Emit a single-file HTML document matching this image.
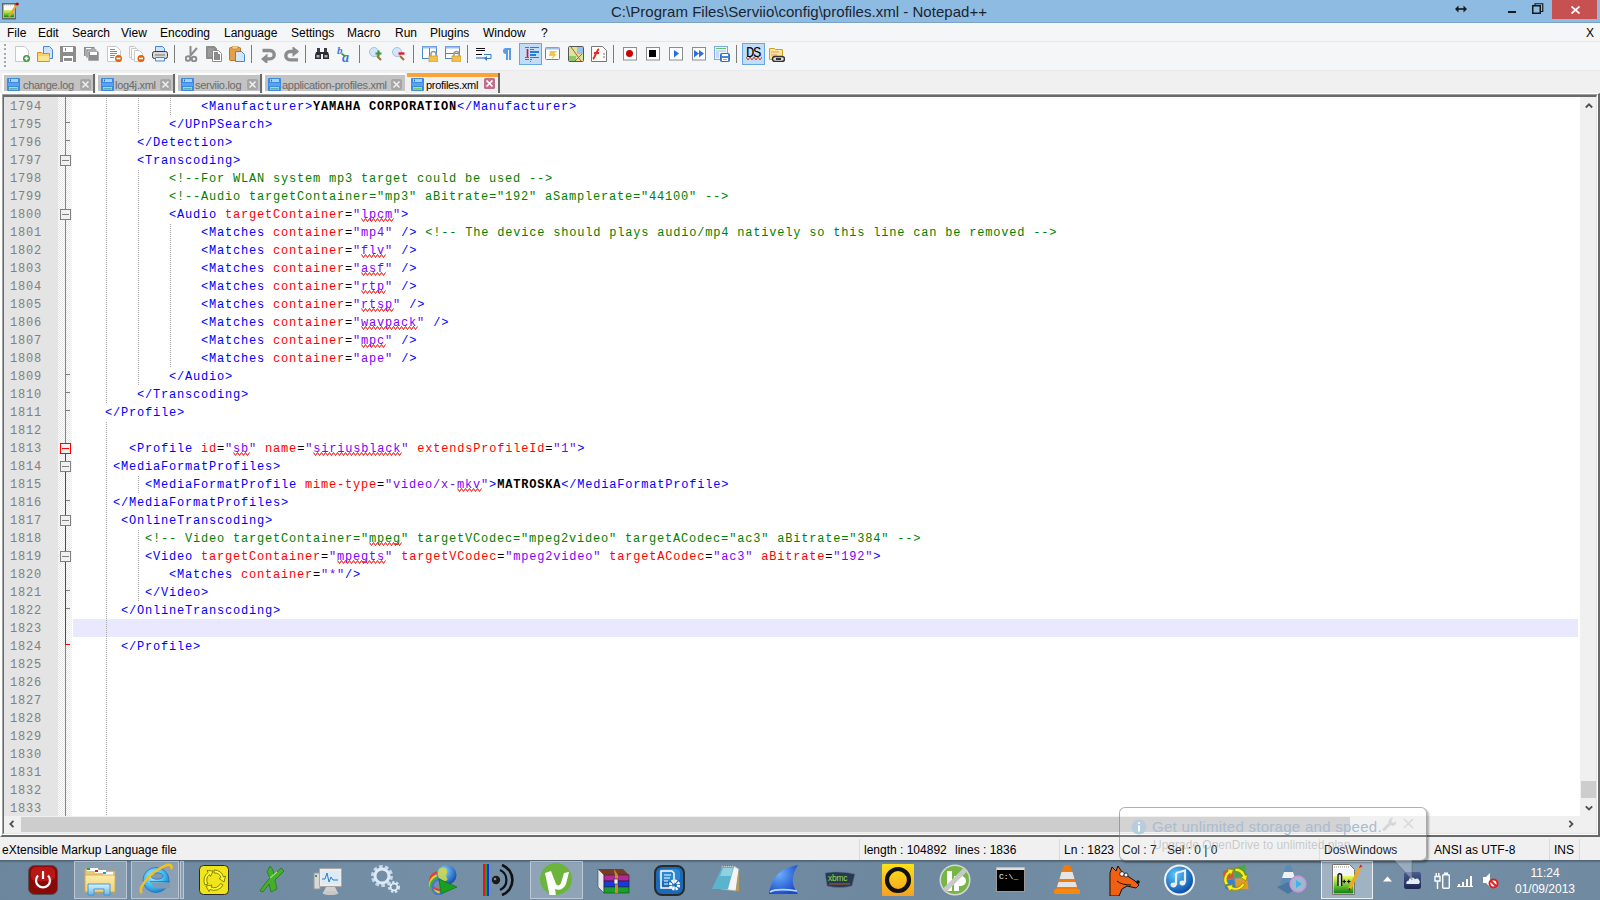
<!DOCTYPE html><html><head><meta charset="utf-8"><style>
*{margin:0;padding:0;box-sizing:border-box}
html,body{width:1600px;height:900px;overflow:hidden;background:#f0f0f0;font-family:"Liberation Sans",sans-serif;}
.abs{position:absolute}
#title{left:0;top:0;width:1600px;height:23px;background:#8dbbe1;border-bottom:1px solid #7aa3c6}
#title .tt{position:absolute;left:611px;top:3px;font-size:15px;color:#1b2430;white-space:nowrap;letter-spacing:0.03px}
#menu{left:0;top:23px;width:1600px;height:19px;background:#f5f6f7;border-bottom:1px solid #e4e6e8}
#menu span{position:absolute;top:3px;font-size:12px;color:#000;white-space:nowrap}
#tool{left:0;top:42px;width:1600px;height:29px;background:#f5f6f7;border-bottom:1px solid #e8e9ea}
#tabs{left:0;top:71px;width:1600px;height:24px;background:#f0f0f0}
.tabt{font-size:11px;letter-spacing:-0.3px;white-space:nowrap;line-height:14px}
.tab{position:absolute;top:4px;height:19px;background:#c3c3c3;border-top:1px solid #fdfdfd;border-left:1px solid #fdfdfd}
.tab .tx{position:absolute;top:3px;font-size:10.6px;color:#6d6d6d;white-space:nowrap;letter-spacing:-0.2px}
.tab .cl{position:absolute;top:3px;width:11px;height:11px;background:#9b9b9b;border-radius:2px}
.tabsep{position:absolute;top:4px;width:2px;height:20px;background:#6a6a6a}
#edo{left:0;top:93px;width:1600px;height:744px;border-top:1px solid #fff;border-left:2px solid #fff;border-right:2px solid #696969;border-bottom:2px solid #696969}
#ed{left:2px;top:94px;width:1596px;height:741px;border-top:1px solid #a0a0a0;border-left:1px solid #a0a0a0;border-right:1px solid #ffffff;border-bottom:1px solid #ffffff}
#edin{position:absolute;left:0;top:0;right:0;bottom:0;border-top:2px solid #696969;border-left:1px solid #696969;border-right:1px solid #e3e3e3;border-bottom:1px solid #e3e3e3;background:#fff;overflow:hidden}
#lnm{left:4px;top:97px;width:54px;height:719px;background:#e4e4e4}
#fold{left:58px;top:97px;width:14px;height:719px;background-color:#fff;background-image:repeating-conic-gradient(#e8e8e8 0 25%,#ffffff 0 50%);background-size:2px 2px}
.ln{position:absolute;left:10px;width:40px;height:18px;font-family:"Liberation Mono",monospace;font-size:12px;letter-spacing:0.8px;margin-top:1px;line-height:18px;color:#808080;white-space:pre}
.cl2{position:absolute;left:73px;height:18px;font-family:"Liberation Mono",monospace;font-size:12px;letter-spacing:0.8px;margin-top:1px;line-height:18px;white-space:pre;color:#000}
.cl2 i{font-style:normal}
.t{color:#0000ff}.a{color:#ff0000}.v{color:#8000ff}.c{color:#008000}.d{color:#000;font-weight:bold}.k{color:#000}
.cl2 u{text-decoration:underline wavy #ff0000;text-decoration-thickness:1px;text-underline-offset:2px;text-decoration-skip-ink:none}
.g{position:absolute;width:1px;background:repeating-linear-gradient(to bottom,#a8a8a8 0 1px,transparent 1px 2px)}
#curl{left:73px;top:619px;width:1505px;height:18px;background:#e8e8ff}
#vsb{left:1580px;top:97px;width:16px;height:736px;background:#f0f0f0}
#hsb{left:4px;top:816px;width:1592px;height:17px;background:#f0f0f0}
#status{left:0;top:837px;width:1600px;height:23px;background:#f0f0f0}
#status span{position:absolute;top:6px;font-size:12px;color:#000;white-space:nowrap}
.ssep{position:absolute;top:2px;width:1px;height:21px;background:#dadada}
#task{left:0;top:860px;width:1600px;height:40px;background:#6f8ea9}
</style></head><body><div id="title" class="abs"><span class="tt">C:\Program Files\Serviio\config\profiles.xml - Notepad++</span></div><svg class="abs" style="left:2px;top:2px" width="18" height="18" viewBox="0 0 18 18"><defs><linearGradient id="ap" x1="0" y1="0" x2="0" y2="1"><stop offset="0" stop-color="#e8f070"/><stop offset="0.5" stop-color="#7ad03a"/><stop offset="1" stop-color="#0a7a10"/></linearGradient></defs><rect x="0.75" y="1.75" width="12.5" height="15" fill="#fff" stroke="#666" stroke-width="1.5"/><path d="M2 3h10" stroke="#aaa" stroke-dasharray="1 1"/><rect x="2" y="8" width="10" height="7.5" fill="url(#ap)"/><path d="M7 14.5l7-11" stroke="#f2a818" stroke-width="2.2"/><circle cx="15.3" cy="2" r="1.5" fill="#b00"/></svg><svg class="abs" style="left:1455px;top:5px" width="12" height="8" viewBox="0 0 12 8"><path d="M1 4h10" stroke="#1a1a1a" stroke-width="1.6"/><path d="M0 4l3.5-3.5v7zM12 4L8.5 0.5v7z" fill="#1a1a1a"/></svg><div class="abs" style="left:1508px;top:11px;width:8px;height:2px;background:#1a1a1a"></div><svg class="abs" style="left:1532px;top:3px" width="12" height="12" viewBox="0 0 12 12"><rect x="0.75" y="2.75" width="7.5" height="7.5" fill="none" stroke="#1a1a1a" stroke-width="1.5"/><path d="M3 2.5V0.75h7.75V8.5H9" fill="none" stroke="#1a1a1a" stroke-width="1.2"/></svg><div class="abs" style="left:1552px;top:0;width:45px;height:19px;background:#c75050"></div><svg class="abs" style="left:1571px;top:6px" width="9" height="8" viewBox="0 0 9 8"><path d="M0.5 0.5l8 7M8.5 0.5l-8 7" stroke="#fff" stroke-width="1.7"/></svg>
<div id="menu" class="abs"><span style="left:7px">File</span><span style="left:38px">Edit</span><span style="left:72px">Search</span><span style="left:121px">View</span><span style="left:160px">Encoding</span><span style="left:224px">Language</span><span style="left:291px">Settings</span><span style="left:347px">Macro</span><span style="left:395px">Run</span><span style="left:430px">Plugins</span><span style="left:483px">Window</span><span style="left:541px">?</span><span style="left:1586px">X</span></div>
<div id="tool" class="abs"></div><div class="abs" style="left:4px;top:44px;width:2px;height:26px;background:repeating-linear-gradient(to bottom,#a8a8a8 0 2px,transparent 2px 4.25px)"></div><svg class="abs" style="left:15px;top:46px" width="16" height="16" viewBox="0 0 16 16"><path d="M0.5 0.5h9l4 4v11h-13z" fill="#fff" stroke="#c8c8c8"/><circle cx="11.5" cy="12.5" r="3.5" fill="#3a9a3a"/><path d="M9.5 12.5h4M11.5 10.5v4" stroke="#fff" stroke-width="1.6"/></svg><svg class="abs" style="left:37px;top:46px" width="16" height="16" viewBox="0 0 16 16"><path d="M6.5 0.5h6l3 3v9h-9z" fill="#cfe3fb" stroke="#4a86d8"/><path d="M0.5 6.5h4l1 1h7v8h-12z" fill="#f7d36a" stroke="#e08a24"/><path d="M1.5 10h11v5h-11z" fill="#fbe58f"/></svg><svg class="abs" style="left:60px;top:46px" width="16" height="16" viewBox="0 0 16 16"><path d="M0 0h15l1 1v15h-16z" fill="#8c8c8c"/><rect x="3" y="1" width="10" height="5" fill="#fff"/><rect x="5" y="2" width="1" height="3" fill="#8c8c8c"/><rect x="3" y="10" width="10" height="6" fill="#fff"/><rect x="4" y="12" width="8" height="3" fill="#8c8c8c"/></svg><svg class="abs" style="left:84px;top:46px" width="16" height="16" viewBox="0 0 16 16"><path d="M0 1h10l1 1v8h-11z" fill="#8c8c8c"/><path d="M2 3h10l1 1v8h-11z" fill="#8c8c8c" stroke="#f5f6f7" stroke-width="0.6"/><path d="M4 5h10l1 1v9h-11z" fill="#8c8c8c" stroke="#f5f6f7" stroke-width="0.6"/><rect x="6" y="6" width="7" height="3" fill="#fff"/><rect x="2" y="2" width="5" height="1" fill="#fff"/></svg><svg class="abs" style="left:107px;top:46px" width="16" height="16" viewBox="0 0 16 16"><path d="M0.5 0.5h9l4 4v11h-13z" fill="#fff" stroke="#c8c8c8"/><path d="M3 3.5h5M3 5.5h7M3 7.5h7M3 9.5h5M3 11.5h4" stroke="#8a8a8a" stroke-width="1"/><circle cx="11.5" cy="12.5" r="3.5" fill="#e3600c"/><path d="M9.5 12.5h4" stroke="#fff" stroke-width="1.6"/></svg><svg class="abs" style="left:129px;top:46px" width="16" height="16" viewBox="0 0 16 16"><path d="M0.5 0.5h5l3 3v8h-8z" fill="#fff" stroke="#c8c8c8"/><path d="M2.5 2.5h5l3 3v8h-8z" fill="#fff" stroke="#c8c8c8"/><path d="M5.5 4.5h5l3 3v8h-8z" fill="#fff" stroke="#c8c8c8"/><circle cx="12" cy="12.5" r="3.5" fill="#e3600c"/><path d="M10 12.5h4" stroke="#fff" stroke-width="1.6"/></svg><svg class="abs" style="left:152px;top:46px" width="16" height="16" viewBox="0 0 16 16"><path d="M3.5 0.5h7l2 2v5h-9z" fill="#cfe3fb" stroke="#4a86d8"/><rect x="0.5" y="5.5" width="15" height="7" rx="2" fill="#d8d8d8" stroke="#3a3a3a"/><rect x="3" y="8" width="10" height="2" fill="#a8a8a8"/><path d="M3.5 11.5h9v3.5h-9z" fill="#eaf3fd" stroke="#4a86d8"/></svg><div class="abs" style="left:174px;top:45px;width:1px;height:18px;background:#7b7b7b"></div><div class="abs" style="left:251px;top:45px;width:1px;height:18px;background:#7b7b7b"></div><div class="abs" style="left:305px;top:45px;width:1px;height:18px;background:#7b7b7b"></div><div class="abs" style="left:359px;top:45px;width:1px;height:18px;background:#7b7b7b"></div><div class="abs" style="left:413px;top:45px;width:1px;height:18px;background:#7b7b7b"></div><div class="abs" style="left:467px;top:45px;width:1px;height:18px;background:#7b7b7b"></div><div class="abs" style="left:613px;top:45px;width:1px;height:18px;background:#7b7b7b"></div><div class="abs" style="left:736px;top:45px;width:1px;height:18px;background:#7b7b7b"></div><svg class="abs" style="left:185px;top:46px" width="13" height="16" viewBox="0 0 13 16"><path d="M5.5 0v9M12 2L5 10" stroke="#8c8c8c" stroke-width="2" fill="none"/><circle cx="3" cy="12.5" r="2.3" fill="none" stroke="#8c8c8c" stroke-width="2"/><circle cx="9" cy="13" r="2.3" fill="none" stroke="#8c8c8c" stroke-width="2"/></svg><svg class="abs" style="left:206px;top:46px" width="16" height="16" viewBox="0 0 16 16"><path d="M0.5 0.5h8l2 2v10h-10z" fill="#8c8c8c" stroke="#8c8c8c"/><path d="M2 2h6v9h-6z" fill="#9a9a9a"/><path d="M6.5 4.5h6l3 3v8h-9z" fill="#fff" stroke="#8c8c8c"/><path d="M8 6h4v2h2v6h-6z" fill="#8c8c8c"/></svg><svg class="abs" style="left:229px;top:46px" width="16" height="16" viewBox="0 0 16 16"><rect x="0.5" y="1.5" width="11" height="13" rx="1" fill="#e2a04a" stroke="#b9762a"/><rect x="3" y="0" width="6" height="3" rx="1" fill="#f3d88a" stroke="#b9762a" stroke-width="0.6"/><path d="M6.5 5.5h6l3 3v7h-9z" fill="#d4e6fb" stroke="#4a86d8"/></svg><svg class="abs" style="left:261px;top:48px" width="15" height="15" viewBox="0 0 15 15"><path d="M1.5 2.5h7.5a4.2 4.2 0 0 1 0 8.4H6" stroke="#8c8c8c" stroke-width="3.4" fill="none"/><path d="M0 11l6.5-5.5v11z" fill="#8c8c8c"/></svg><svg class="abs" style="left:284px;top:47px" width="15" height="15" viewBox="0 0 15 15"><path d="M13.5 4.5H6a4.2 4.2 0 0 0 0 8.4h8" stroke="#8c8c8c" stroke-width="3.4" fill="none"/><path d="M15 4.5L8.5 -1v11z" fill="#8c8c8c"/></svg><svg class="abs" style="left:315px;top:47px" width="14" height="13" viewBox="0 0 14 13"><path d="M1 5h5v7h-6v-4z M8 5h5l1 3v4h-6z" fill="#2a2e33"/><rect x="2" y="1" width="3" height="4" fill="#3a3e44"/><rect x="9" y="1" width="3" height="4" fill="#3a3e44"/><rect x="5" y="5" width="4" height="2" fill="#2a2e33"/><rect x="1.5" y="8" width="3" height="2.5" fill="#aab0b8"/><rect x="9.5" y="8" width="3" height="2.5" fill="#aab0b8"/></svg><svg class="abs" style="left:337px;top:46px" width="16" height="16" viewBox="0 0 16 16"><text x="0" y="8" font-family="Liberation Serif" font-style="italic" font-weight="bold" font-size="11" fill="#2f7ae0">b</text><text x="5" y="15.5" font-family="Liberation Serif" font-style="italic" font-weight="bold" font-size="14" fill="#2f7ae0">a</text><path d="M4.5 7.5l4 3" stroke="#3aa03a" stroke-width="1.6"/></svg><svg class="abs" style="left:369px;top:47px" width="14" height="14" viewBox="0 0 14 14"><circle cx="5" cy="5" r="4.5" fill="#d6e6f8" stroke="#9ec0e8"/><path d="M8 9l4 4" stroke="#a0703a" stroke-width="2.2"/><path d="M6.5 6.5h6M9.5 3.5v6" stroke="#3a9a3a" stroke-width="2.2"/></svg><svg class="abs" style="left:392px;top:47px" width="14" height="14" viewBox="0 0 14 14"><circle cx="5" cy="5" r="4.5" fill="#d6e6f8" stroke="#9ec0e8"/><path d="M8 9l4 4" stroke="#a0703a" stroke-width="2.2"/><path d="M6.5 6.5h6" stroke="#e0202a" stroke-width="2.4"/></svg><svg class="abs" style="left:422px;top:46px" width="16" height="16" viewBox="0 0 16 16"><rect x="0.5" y="0.5" width="14" height="12" fill="#fff" stroke="#4a86d8"/><rect x="0.5" y="0.5" width="14" height="2" fill="#9ec0e8"/><path d="M7.5 2v10" stroke="#4a86d8"/><path d="M9 11V8a2.5 2.5 0 0 1 5 0v3" stroke="#9a9a9a" stroke-width="1.5" fill="none"/><rect x="7" y="10" width="9" height="6" fill="#f2c14a" stroke="#d89a2a" stroke-width="0.8"/></svg><svg class="abs" style="left:445px;top:46px" width="16" height="16" viewBox="0 0 16 16"><rect x="0.5" y="0.5" width="14" height="12" fill="#fff" stroke="#4a86d8"/><rect x="0.5" y="0.5" width="14" height="2" fill="#9ec0e8"/><path d="M1 7.5h13" stroke="#4a86d8"/><path d="M9 11V8a2.5 2.5 0 0 1 5 0v3" stroke="#9a9a9a" stroke-width="1.5" fill="none"/><rect x="7" y="10" width="9" height="6" fill="#f2c14a" stroke="#d89a2a" stroke-width="0.8"/></svg><svg class="abs" style="left:476px;top:47px" width="16" height="15" viewBox="0 0 16 15"><path d="M0 1.5h9M0 3.5h9M0 7.5h6" stroke="#111" stroke-width="1"/><path d="M8 7.5h7v4h-6" stroke="#3a78c8" stroke-width="1" fill="none"/><rect x="0" y="10" width="10" height="2" fill="#7aacea"/><path d="M8 11.5l3-2.5v5z" fill="#3a78c8"/></svg><svg class="abs" style="left:502px;top:48px" width="9" height="12" viewBox="0 0 9 12"><path d="M4 0h5v12h-2V2h-1v10H4V6a3 3 0 0 1 0-6z" fill="#5a9be8"/></svg><div class="abs" style="left:519px;top:43px;width:23px;height:22px;background:#c4ddf7;border:1px solid #66a6e8"></div><svg class="abs" style="left:524px;top:47px" width="16" height="15" viewBox="0 0 16 15"><g fill="#2a7ae4"><rect x="1" y="0" width="4" height="1"/><rect x="6" y="0" width="9" height="1"/><rect x="6" y="2" width="4" height="1"/><rect x="6" y="4" width="9" height="2"/><rect x="6" y="7" width="6" height="2"/><rect x="1" y="10" width="4" height="1"/><rect x="6" y="10" width="9" height="1"/><rect x="1" y="12" width="4" height="1"/><rect x="6" y="12" width="2" height="1"/><rect x="6" y="14" width="1" height="1"/></g><g fill="#e00000"><rect x="2.5" y="2" width="2" height="2" rx="1"/><rect x="2.5" y="4" width="2" height="2" rx="1"/><rect x="2.5" y="6" width="2" height="2" rx="1"/><rect x="2.5" y="8" width="2" height="2" rx="1"/></g></svg><svg class="abs" style="left:545px;top:47px" width="15" height="14" viewBox="0 0 15 14"><rect x="0.5" y="0.5" width="14" height="12" rx="1" fill="#fff" stroke="#4a86d8"/><rect x="0.5" y="0.5" width="14" height="2" fill="#9ec0e8"/><path d="M5 4h7l-3 3h3l-6 6 2-4H4z" fill="#f2c64a"/></svg><svg class="abs" style="left:568px;top:46px" width="16" height="16" viewBox="0 0 16 16"><rect x="0.5" y="0.5" width="15" height="15" rx="1" fill="#d8e6a0" stroke="#555"/><path d="M9 1h6v7H9z" fill="#9ec0e8"/><path d="M1 10h7v5H1z" fill="#8cc86a"/><path d="M3 1l10 14M14 8l-7 7" stroke="#e04a2a" stroke-width="1"/></svg><svg class="abs" style="left:591px;top:46px" width="16" height="16" viewBox="0 0 16 16"><path d="M0.5 0.5h11l4 4v11h-15z" fill="#fffdf5" stroke="#777"/><path d="M2 13c2-1 3-8 6-10M3 7h5" stroke="#e02a2a" stroke-width="2" fill="none"/><path d="M13 7v5" stroke="#777" stroke-width="1" stroke-dasharray="2 1"/></svg><svg class="abs" style="left:623px;top:47px" width="14" height="14" viewBox="0 0 14 14"><rect x="0.5" y="0.5" width="13" height="12.5" fill="#fff" stroke="#8c8c8c"/><circle cx="6.5" cy="6.5" r="3.5" fill="#c80000"/></svg><svg class="abs" style="left:646px;top:47px" width="14" height="14" viewBox="0 0 14 14"><rect x="0.5" y="0.5" width="13" height="12.5" fill="#fff" stroke="#8c8c8c"/><rect x="3" y="3" width="7" height="7" fill="#000"/></svg><svg class="abs" style="left:669px;top:47px" width="14" height="14" viewBox="0 0 14 14"><rect x="0.5" y="0.5" width="13" height="12.5" fill="#fff" stroke="#8c8c8c"/><path d="M5 3l5 3.5-5 4z" fill="#2a6ee0"/></svg><svg class="abs" style="left:692px;top:47px" width="14" height="14" viewBox="0 0 14 14"><rect x="0.5" y="0.5" width="13" height="12.5" fill="#fff" stroke="#8c8c8c"/><path d="M2 3l5 3.5-5 4zM7 3l5 3.5-5 4z" fill="#2a6ee0"/></svg><svg class="abs" style="left:714px;top:46px" width="16" height="16" viewBox="0 0 16 16"><rect x="0.5" y="0.5" width="13" height="13" fill="#eef4fd" stroke="#7aaae8"/><path d="M2 2.5h10" stroke="#6ac06a"/><path d="M2 5h10" stroke="#9ec0e8"/><path d="M2 7h3M2 9h3M2 11h3" stroke="#9ec0e8"/><rect x="6.5" y="7.5" width="9" height="8" rx="1" fill="#4a86d8" stroke="#3a6ab8"/><rect x="8" y="8" width="6" height="2" fill="#fff"/><rect x="8" y="12" width="6" height="3" fill="#fff"/><rect x="9" y="13" width="4" height="1" fill="#8cd04a"/></svg><div class="abs" style="left:742px;top:43px;width:23px;height:22px;background:#c4ddf7;border:1px solid #66a6e8"></div><div class="abs" style="left:746px;top:46px;font-family:'Liberation Mono',monospace;font-size:14px;font-weight:normal;color:#000;letter-spacing:-1.5px;line-height:14px">DS</div><svg class="abs" style="left:746px;top:57px" width="16" height="4" viewBox="0 0 16 4"><path d="M0 0l2 3 2-3 2 3 2-3 2 3 2-3 2 3 2-3" stroke="#e02a00" stroke-width="0.9" fill="none"/></svg><svg class="abs" style="left:769px;top:48px" width="16" height="14" viewBox="0 0 16 14"><path d="M0.5 0.5h5l1 1h7v10h-13z" fill="#fbe6a0" stroke="#d0a020"/><path d="M2 4h8M2 7h6" stroke="#f5b070" stroke-width="1.5"/><rect x="3.5" y="8.5" width="12" height="5" rx="2.5" fill="#ddd" stroke="#333" stroke-width="1.4"/><rect x="7" y="10" width="5" height="2" fill="#333"/></svg>
<div id="tabs" class="abs"></div><div class="abs" style="left:2px;top:73px;width:92px;height:20px;background:#fdfdfd"></div><div class="abs" style="left:4px;top:75px;width:90px;height:16px;background:#c3c3c3"></div><svg class="abs" style="left:7px;top:78px" width="13" height="13" viewBox="0 0 13 13"><rect x="0" y="0" width="13" height="13" rx="1" fill="#3a8be6"/><rect x="2" y="1" width="9" height="3" fill="#a8d0ff"/><rect x="3" y="1.5" width="1" height="2" fill="#2a6ac0"/><rect x="1" y="5" width="11" height="3" fill="#5aa2f0"/><rect x="2" y="9" width="9" height="3" fill="#a8d0ff"/><rect x="2.5" y="10" width="8" height="1.6" fill="#5eb0a0"/></svg><span class="abs tabt" style="left:23px;top:78px;color:#6a6a6a">change.log</span><svg class="abs" style="left:80px;top:79px" width="11" height="11" viewBox="0 0 11 11"><rect x="0" y="0" width="11" height="11" rx="2" fill="#a6a6a6"/><path d="M2.5 2.5l6 6M8.5 2.5l-6 6" stroke="#eee" stroke-width="1.6"/></svg><div class="abs" style="left:93px;top:74px;width:2px;height:19px;background:#6a6a6a"></div><div class="abs" style="left:96px;top:73px;width:78px;height:20px;background:#fdfdfd"></div><div class="abs" style="left:98px;top:75px;width:76px;height:16px;background:#c3c3c3"></div><svg class="abs" style="left:101px;top:78px" width="13" height="13" viewBox="0 0 13 13"><rect x="0" y="0" width="13" height="13" rx="1" fill="#3a8be6"/><rect x="2" y="1" width="9" height="3" fill="#a8d0ff"/><rect x="3" y="1.5" width="1" height="2" fill="#2a6ac0"/><rect x="1" y="5" width="11" height="3" fill="#5aa2f0"/><rect x="2" y="9" width="9" height="3" fill="#a8d0ff"/><rect x="2.5" y="10" width="8" height="1.6" fill="#5eb0a0"/></svg><span class="abs tabt" style="left:115px;top:78px;color:#6a6a6a">log4j.xml</span><svg class="abs" style="left:160px;top:79px" width="11" height="11" viewBox="0 0 11 11"><rect x="0" y="0" width="11" height="11" rx="2" fill="#a6a6a6"/><path d="M2.5 2.5l6 6M8.5 2.5l-6 6" stroke="#eee" stroke-width="1.6"/></svg><div class="abs" style="left:173px;top:74px;width:2px;height:19px;background:#6a6a6a"></div><div class="abs" style="left:176px;top:73px;width:85px;height:20px;background:#fdfdfd"></div><div class="abs" style="left:178px;top:75px;width:83px;height:16px;background:#c3c3c3"></div><svg class="abs" style="left:181px;top:78px" width="13" height="13" viewBox="0 0 13 13"><rect x="0" y="0" width="13" height="13" rx="1" fill="#3a8be6"/><rect x="2" y="1" width="9" height="3" fill="#a8d0ff"/><rect x="3" y="1.5" width="1" height="2" fill="#2a6ac0"/><rect x="1" y="5" width="11" height="3" fill="#5aa2f0"/><rect x="2" y="9" width="9" height="3" fill="#a8d0ff"/><rect x="2.5" y="10" width="8" height="1.6" fill="#5eb0a0"/></svg><span class="abs tabt" style="left:195px;top:78px;color:#6a6a6a">serviio.log</span><svg class="abs" style="left:247px;top:79px" width="11" height="11" viewBox="0 0 11 11"><rect x="0" y="0" width="11" height="11" rx="2" fill="#a6a6a6"/><path d="M2.5 2.5l6 6M8.5 2.5l-6 6" stroke="#eee" stroke-width="1.6"/></svg><div class="abs" style="left:260px;top:74px;width:2px;height:19px;background:#6a6a6a"></div><div class="abs" style="left:263px;top:73px;width:142px;height:20px;background:#fdfdfd"></div><div class="abs" style="left:265px;top:75px;width:140px;height:16px;background:#c3c3c3"></div><svg class="abs" style="left:268px;top:78px" width="13" height="13" viewBox="0 0 13 13"><rect x="0" y="0" width="13" height="13" rx="1" fill="#3a8be6"/><rect x="2" y="1" width="9" height="3" fill="#a8d0ff"/><rect x="3" y="1.5" width="1" height="2" fill="#2a6ac0"/><rect x="1" y="5" width="11" height="3" fill="#5aa2f0"/><rect x="2" y="9" width="9" height="3" fill="#a8d0ff"/><rect x="2.5" y="10" width="8" height="1.6" fill="#5eb0a0"/></svg><span class="abs tabt" style="left:282px;top:78px;color:#6a6a6a">application-profiles.xml</span><svg class="abs" style="left:391px;top:79px" width="11" height="11" viewBox="0 0 11 11"><rect x="0" y="0" width="11" height="11" rx="2" fill="#a6a6a6"/><path d="M2.5 2.5l6 6M8.5 2.5l-6 6" stroke="#eee" stroke-width="1.6"/></svg><div class="abs" style="left:406px;top:73px;width:94px;height:21px;background:#f0f0f0"></div><div class="abs" style="left:407px;top:73px;width:91px;height:4px;background:#f9a33a"></div><div class="abs" style="left:498px;top:73px;width:2px;height:21px;background:#6a6a6a"></div><svg class="abs" style="left:411px;top:78px" width="13" height="13" viewBox="0 0 13 13"><rect x="0" y="0" width="13" height="13" rx="1" fill="#3a8be6"/><rect x="2" y="1" width="9" height="3" fill="#a8d0ff"/><rect x="3" y="1.5" width="1" height="2" fill="#2a6ac0"/><rect x="1" y="5" width="11" height="3" fill="#5aa2f0"/><rect x="2" y="9" width="9" height="3" fill="#a8d0ff"/><rect x="2.5" y="10" width="8" height="1.6" fill="#7ec850"/></svg><span class="abs tabt" style="left:426px;top:78px;color:#000">profiles.xml</span><svg class="abs" style="left:484px;top:78px" width="11" height="11" viewBox="0 0 11 11"><rect x="0" y="0" width="11" height="11" rx="1.5" fill="#c0718a"/><path d="M2.5 2.5l6 6M8.5 2.5l-6 6" stroke="#fff" stroke-width="1.7"/></svg>
<div id="edo" class="abs"></div><div id="ed" class="abs"><div id="edin"></div></div>
<div id="lnm" class="abs"></div><div id="fold" class="abs"></div>
<div id="curl" class="abs"></div>
<div class="ln" style="top:97px">1794</div>
<div class="ln" style="top:115px">1795</div>
<div class="ln" style="top:133px">1796</div>
<div class="ln" style="top:151px">1797</div>
<div class="ln" style="top:169px">1798</div>
<div class="ln" style="top:187px">1799</div>
<div class="ln" style="top:205px">1800</div>
<div class="ln" style="top:223px">1801</div>
<div class="ln" style="top:241px">1802</div>
<div class="ln" style="top:259px">1803</div>
<div class="ln" style="top:277px">1804</div>
<div class="ln" style="top:295px">1805</div>
<div class="ln" style="top:313px">1806</div>
<div class="ln" style="top:331px">1807</div>
<div class="ln" style="top:349px">1808</div>
<div class="ln" style="top:367px">1809</div>
<div class="ln" style="top:385px">1810</div>
<div class="ln" style="top:403px">1811</div>
<div class="ln" style="top:421px">1812</div>
<div class="ln" style="top:439px">1813</div>
<div class="ln" style="top:457px">1814</div>
<div class="ln" style="top:475px">1815</div>
<div class="ln" style="top:493px">1816</div>
<div class="ln" style="top:511px">1817</div>
<div class="ln" style="top:529px">1818</div>
<div class="ln" style="top:547px">1819</div>
<div class="ln" style="top:565px">1820</div>
<div class="ln" style="top:583px">1821</div>
<div class="ln" style="top:601px">1822</div>
<div class="ln" style="top:619px">1823</div>
<div class="ln" style="top:637px">1824</div>
<div class="ln" style="top:655px">1825</div>
<div class="ln" style="top:673px">1826</div>
<div class="ln" style="top:691px">1827</div>
<div class="ln" style="top:709px">1828</div>
<div class="ln" style="top:727px">1829</div>
<div class="ln" style="top:745px">1830</div>
<div class="ln" style="top:763px">1831</div>
<div class="ln" style="top:781px">1832</div>
<div class="ln" style="top:799px">1833</div>
<div class="g" style="left:106px;top:98px;height:18px"></div>
<div class="g" style="left:138px;top:98px;height:18px"></div>
<div class="g" style="left:170px;top:98px;height:18px"></div>
<div class="g" style="left:106px;top:116px;height:18px"></div>
<div class="g" style="left:138px;top:116px;height:18px"></div>
<div class="g" style="left:106px;top:134px;height:18px"></div>
<div class="g" style="left:106px;top:152px;height:18px"></div>
<div class="g" style="left:106px;top:170px;height:18px"></div>
<div class="g" style="left:138px;top:170px;height:18px"></div>
<div class="g" style="left:106px;top:188px;height:18px"></div>
<div class="g" style="left:138px;top:188px;height:18px"></div>
<div class="g" style="left:106px;top:206px;height:18px"></div>
<div class="g" style="left:138px;top:206px;height:18px"></div>
<div class="g" style="left:106px;top:224px;height:18px"></div>
<div class="g" style="left:138px;top:224px;height:18px"></div>
<div class="g" style="left:170px;top:224px;height:18px"></div>
<div class="g" style="left:106px;top:242px;height:18px"></div>
<div class="g" style="left:138px;top:242px;height:18px"></div>
<div class="g" style="left:170px;top:242px;height:18px"></div>
<div class="g" style="left:106px;top:260px;height:18px"></div>
<div class="g" style="left:138px;top:260px;height:18px"></div>
<div class="g" style="left:170px;top:260px;height:18px"></div>
<div class="g" style="left:106px;top:278px;height:18px"></div>
<div class="g" style="left:138px;top:278px;height:18px"></div>
<div class="g" style="left:170px;top:278px;height:18px"></div>
<div class="g" style="left:106px;top:296px;height:18px"></div>
<div class="g" style="left:138px;top:296px;height:18px"></div>
<div class="g" style="left:170px;top:296px;height:18px"></div>
<div class="g" style="left:106px;top:314px;height:18px"></div>
<div class="g" style="left:138px;top:314px;height:18px"></div>
<div class="g" style="left:170px;top:314px;height:18px"></div>
<div class="g" style="left:106px;top:332px;height:18px"></div>
<div class="g" style="left:138px;top:332px;height:18px"></div>
<div class="g" style="left:170px;top:332px;height:18px"></div>
<div class="g" style="left:106px;top:350px;height:18px"></div>
<div class="g" style="left:138px;top:350px;height:18px"></div>
<div class="g" style="left:170px;top:350px;height:18px"></div>
<div class="g" style="left:106px;top:368px;height:18px"></div>
<div class="g" style="left:138px;top:368px;height:18px"></div>
<div class="g" style="left:106px;top:386px;height:18px"></div>
<div class="g" style="left:106px;top:422px;height:18px"></div>
<div class="g" style="left:106px;top:440px;height:18px"></div>
<div class="g" style="left:106px;top:458px;height:18px"></div>
<div class="g" style="left:106px;top:476px;height:18px"></div>
<div class="g" style="left:138px;top:476px;height:18px"></div>
<div class="g" style="left:106px;top:494px;height:18px"></div>
<div class="g" style="left:106px;top:512px;height:18px"></div>
<div class="g" style="left:106px;top:530px;height:18px"></div>
<div class="g" style="left:138px;top:530px;height:18px"></div>
<div class="g" style="left:106px;top:548px;height:18px"></div>
<div class="g" style="left:138px;top:548px;height:18px"></div>
<div class="g" style="left:106px;top:566px;height:18px"></div>
<div class="g" style="left:138px;top:566px;height:18px"></div>
<div class="g" style="left:106px;top:584px;height:18px"></div>
<div class="g" style="left:138px;top:584px;height:18px"></div>
<div class="g" style="left:106px;top:602px;height:18px"></div>
<div class="g" style="left:106px;top:620px;height:18px"></div>
<div class="g" style="left:106px;top:638px;height:18px"></div>
<div class="g" style="left:106px;top:656px;height:18px"></div>
<div class="g" style="left:106px;top:674px;height:18px"></div>
<div class="g" style="left:106px;top:692px;height:18px"></div>
<div class="g" style="left:106px;top:710px;height:18px"></div>
<div class="g" style="left:106px;top:728px;height:18px"></div>
<div class="g" style="left:106px;top:746px;height:18px"></div>
<div class="g" style="left:106px;top:764px;height:18px"></div>
<div class="g" style="left:106px;top:782px;height:18px"></div>
<div class="g" style="left:106px;top:800px;height:18px"></div>
<div class="cl2" style="top:97px">                <i class="t">&lt;Manufacturer&gt;</i><i class="d">YAMAHA CORPORATION</i><i class="t">&lt;/Manufacturer&gt;</i></div>
<div class="cl2" style="top:115px">            <i class="t">&lt;/UPnPSearch&gt;</i></div>
<div class="cl2" style="top:133px">        <i class="t">&lt;/Detection&gt;</i></div>
<div class="cl2" style="top:151px">        <i class="t">&lt;Transcoding&gt;</i></div>
<div class="cl2" style="top:169px">            <i class="c">&lt;!--For WLAN system mp3 target could be used --&gt;</i></div>
<div class="cl2" style="top:187px">            <i class="c">&lt;!--Audio targetContainer=&quot;mp3&quot; aBitrate=&quot;192&quot; aSamplerate=&quot;44100&quot; --&gt;</i></div>
<div class="cl2" style="top:205px">            <i class="t">&lt;Audio</i> <i class="a">targetContainer</i><i class="k">=</i><i class="v">&quot;lpcm&quot;</i><i class="t">&gt;</i></div>
<div class="cl2" style="top:223px">                <i class="t">&lt;Matches</i> <i class="a">container</i><i class="k">=</i><i class="v">&quot;mp4&quot;</i> <i class="t">/&gt;</i> <i class="c">&lt;!-- The device should plays audio/mp4 natively so this line can be removed --&gt;</i></div>
<div class="cl2" style="top:241px">                <i class="t">&lt;Matches</i> <i class="a">container</i><i class="k">=</i><i class="v">&quot;flv&quot;</i> <i class="t">/&gt;</i></div>
<div class="cl2" style="top:259px">                <i class="t">&lt;Matches</i> <i class="a">container</i><i class="k">=</i><i class="v">&quot;asf&quot;</i> <i class="t">/&gt;</i></div>
<div class="cl2" style="top:277px">                <i class="t">&lt;Matches</i> <i class="a">container</i><i class="k">=</i><i class="v">&quot;rtp&quot;</i> <i class="t">/&gt;</i></div>
<div class="cl2" style="top:295px">                <i class="t">&lt;Matches</i> <i class="a">container</i><i class="k">=</i><i class="v">&quot;rtsp&quot;</i> <i class="t">/&gt;</i></div>
<div class="cl2" style="top:313px">                <i class="t">&lt;Matches</i> <i class="a">container</i><i class="k">=</i><i class="v">&quot;wavpack&quot;</i> <i class="t">/&gt;</i></div>
<div class="cl2" style="top:331px">                <i class="t">&lt;Matches</i> <i class="a">container</i><i class="k">=</i><i class="v">&quot;mpc&quot;</i> <i class="t">/&gt;</i></div>
<div class="cl2" style="top:349px">                <i class="t">&lt;Matches</i> <i class="a">container</i><i class="k">=</i><i class="v">&quot;ape&quot;</i> <i class="t">/&gt;</i></div>
<div class="cl2" style="top:367px">            <i class="t">&lt;/Audio&gt;</i></div>
<div class="cl2" style="top:385px">        <i class="t">&lt;/Transcoding&gt;</i></div>
<div class="cl2" style="top:403px">    <i class="t">&lt;/Profile&gt;</i></div>
<div class="cl2" style="top:439px">       <i class="t">&lt;Profile</i> <i class="a">id</i><i class="k">=</i><i class="v">&quot;sb&quot;</i> <i class="a">name</i><i class="k">=</i><i class="v">&quot;siriusblack&quot;</i> <i class="a">extendsProfileId</i><i class="k">=</i><i class="v">&quot;1&quot;</i><i class="t">&gt;</i></div>
<div class="cl2" style="top:457px">     <i class="t">&lt;MediaFormatProfiles&gt;</i></div>
<div class="cl2" style="top:475px">         <i class="t">&lt;MediaFormatProfile</i> <i class="a">mime-type</i><i class="k">=</i><i class="v">&quot;video/x-mkv&quot;</i><i class="t">&gt;</i><i class="d">MATROSKA</i><i class="t">&lt;/MediaFormatProfile&gt;</i></div>
<div class="cl2" style="top:493px">     <i class="t">&lt;/MediaFormatProfiles&gt;</i></div>
<div class="cl2" style="top:511px">      <i class="t">&lt;OnlineTranscoding&gt;</i></div>
<div class="cl2" style="top:529px">         <i class="c">&lt;!-- Video targetContainer=&quot;</i><i class="c">mpeg</i><i class="c">&quot; targetVCodec=&quot;mpeg2video&quot; targetACodec=&quot;ac3&quot; aBitrate=&quot;384&quot; --&gt;</i></div>
<div class="cl2" style="top:547px">         <i class="t">&lt;Video</i> <i class="a">targetContainer</i><i class="k">=</i><i class="v">&quot;mpegts&quot;</i> <i class="a">targetVCodec</i><i class="k">=</i><i class="v">&quot;mpeg2video&quot;</i> <i class="a">targetACodec</i><i class="k">=</i><i class="v">&quot;ac3&quot;</i> <i class="a">aBitrate</i><i class="k">=</i><i class="v">&quot;192&quot;</i><i class="t">&gt;</i></div>
<div class="cl2" style="top:565px">            <i class="t">&lt;Matches</i> <i class="a">container</i><i class="k">=</i><i class="v">&quot;*&quot;</i><i class="t">/&gt;</i></div>
<div class="cl2" style="top:583px">         <i class="t">&lt;/Video&gt;</i></div>
<div class="cl2" style="top:601px">      <i class="t">&lt;/OnlineTranscoding&gt;</i></div>
<div class="cl2" style="top:637px">      <i class="t">&lt;/Profile&gt;</i></div>
<div class="abs" style="left:65px;top:97px;width:1px;height:18px;background:#808080"></div><div class="abs" style="left:65px;top:115px;width:1px;height:8px;background:#808080"></div><div class="abs" style="left:65px;top:123px;width:1px;height:10px;background:#808080"></div><div class="abs" style="left:66px;top:122px;width:4px;height:1px;background:#808080"></div><div class="abs" style="left:65px;top:133px;width:1px;height:8px;background:#808080"></div><div class="abs" style="left:65px;top:141px;width:1px;height:10px;background:#808080"></div><div class="abs" style="left:66px;top:140px;width:4px;height:1px;background:#808080"></div><div class="abs" style="left:65px;top:151px;width:1px;height:4px;background:#808080"></div><div class="abs" style="left:65px;top:165px;width:1px;height:4px;background:#808080"></div><div class="abs" style="left:60px;top:155px;width:11px;height:11px;border:1px solid #808080;background:#f0f0f0"></div><div class="abs" style="left:62px;top:160px;width:7px;height:1px;background:#808080"></div><div class="abs" style="left:65px;top:169px;width:1px;height:18px;background:#808080"></div><div class="abs" style="left:65px;top:187px;width:1px;height:18px;background:#808080"></div><div class="abs" style="left:65px;top:205px;width:1px;height:4px;background:#808080"></div><div class="abs" style="left:65px;top:219px;width:1px;height:4px;background:#808080"></div><div class="abs" style="left:60px;top:209px;width:11px;height:11px;border:1px solid #808080;background:#f0f0f0"></div><div class="abs" style="left:62px;top:214px;width:7px;height:1px;background:#808080"></div><div class="abs" style="left:65px;top:223px;width:1px;height:18px;background:#808080"></div><div class="abs" style="left:65px;top:241px;width:1px;height:18px;background:#808080"></div><div class="abs" style="left:65px;top:259px;width:1px;height:18px;background:#808080"></div><div class="abs" style="left:65px;top:277px;width:1px;height:18px;background:#808080"></div><div class="abs" style="left:65px;top:295px;width:1px;height:18px;background:#808080"></div><div class="abs" style="left:65px;top:313px;width:1px;height:18px;background:#808080"></div><div class="abs" style="left:65px;top:331px;width:1px;height:18px;background:#808080"></div><div class="abs" style="left:65px;top:349px;width:1px;height:18px;background:#808080"></div><div class="abs" style="left:65px;top:367px;width:1px;height:8px;background:#808080"></div><div class="abs" style="left:65px;top:375px;width:1px;height:10px;background:#808080"></div><div class="abs" style="left:66px;top:374px;width:4px;height:1px;background:#808080"></div><div class="abs" style="left:65px;top:385px;width:1px;height:8px;background:#808080"></div><div class="abs" style="left:65px;top:393px;width:1px;height:10px;background:#808080"></div><div class="abs" style="left:66px;top:392px;width:4px;height:1px;background:#808080"></div><div class="abs" style="left:65px;top:403px;width:1px;height:8px;background:#808080"></div><div class="abs" style="left:65px;top:411px;width:1px;height:10px;background:#808080"></div><div class="abs" style="left:66px;top:410px;width:4px;height:1px;background:#808080"></div><div class="abs" style="left:65px;top:421px;width:1px;height:18px;background:#808080"></div><div class="abs" style="left:65px;top:439px;width:1px;height:4px;background:#808080"></div><div class="abs" style="left:65px;top:453px;width:1px;height:4px;background:#ff0000"></div><div class="abs" style="left:60px;top:443px;width:11px;height:11px;border:1px solid #ff0000;background:#f0f0f0"></div><div class="abs" style="left:62px;top:448px;width:7px;height:1px;background:#ff0000"></div><div class="abs" style="left:65px;top:457px;width:1px;height:4px;background:#ff0000"></div><div class="abs" style="left:65px;top:471px;width:1px;height:4px;background:#ff0000"></div><div class="abs" style="left:60px;top:461px;width:11px;height:11px;border:1px solid #808080;background:#f0f0f0"></div><div class="abs" style="left:62px;top:466px;width:7px;height:1px;background:#808080"></div><div class="abs" style="left:65px;top:475px;width:1px;height:18px;background:#ff0000"></div><div class="abs" style="left:65px;top:493px;width:1px;height:8px;background:#ff0000"></div><div class="abs" style="left:65px;top:501px;width:1px;height:10px;background:#ff0000"></div><div class="abs" style="left:66px;top:500px;width:4px;height:1px;background:#808080"></div><div class="abs" style="left:65px;top:511px;width:1px;height:4px;background:#ff0000"></div><div class="abs" style="left:65px;top:525px;width:1px;height:4px;background:#ff0000"></div><div class="abs" style="left:60px;top:515px;width:11px;height:11px;border:1px solid #808080;background:#f0f0f0"></div><div class="abs" style="left:62px;top:520px;width:7px;height:1px;background:#808080"></div><div class="abs" style="left:65px;top:529px;width:1px;height:18px;background:#ff0000"></div><div class="abs" style="left:65px;top:547px;width:1px;height:4px;background:#ff0000"></div><div class="abs" style="left:65px;top:561px;width:1px;height:4px;background:#ff0000"></div><div class="abs" style="left:60px;top:551px;width:11px;height:11px;border:1px solid #808080;background:#f0f0f0"></div><div class="abs" style="left:62px;top:556px;width:7px;height:1px;background:#808080"></div><div class="abs" style="left:65px;top:565px;width:1px;height:18px;background:#ff0000"></div><div class="abs" style="left:65px;top:583px;width:1px;height:8px;background:#ff0000"></div><div class="abs" style="left:65px;top:591px;width:1px;height:10px;background:#ff0000"></div><div class="abs" style="left:66px;top:590px;width:4px;height:1px;background:#808080"></div><div class="abs" style="left:65px;top:601px;width:1px;height:8px;background:#ff0000"></div><div class="abs" style="left:65px;top:609px;width:1px;height:10px;background:#ff0000"></div><div class="abs" style="left:66px;top:608px;width:4px;height:1px;background:#808080"></div><div class="abs" style="left:65px;top:619px;width:1px;height:18px;background:#ff0000"></div><div class="abs" style="left:65px;top:637px;width:1px;height:8px;background:#ff0000"></div><div class="abs" style="left:65px;top:645px;width:1px;height:10px;background:#808080"></div><div class="abs" style="left:66px;top:644px;width:4px;height:1px;background:#ff0000"></div><div class="abs" style="left:65px;top:655px;width:1px;height:18px;background:#808080"></div><div class="abs" style="left:65px;top:673px;width:1px;height:18px;background:#808080"></div><div class="abs" style="left:65px;top:691px;width:1px;height:18px;background:#808080"></div><div class="abs" style="left:65px;top:709px;width:1px;height:18px;background:#808080"></div><div class="abs" style="left:65px;top:727px;width:1px;height:18px;background:#808080"></div><div class="abs" style="left:65px;top:745px;width:1px;height:18px;background:#808080"></div><div class="abs" style="left:65px;top:763px;width:1px;height:18px;background:#808080"></div><div class="abs" style="left:65px;top:781px;width:1px;height:18px;background:#808080"></div><div class="abs" style="left:65px;top:799px;width:1px;height:18px;background:#808080"></div>
<svg class="abs" style="left:361px;top:218px" width="33" height="4" viewBox="0 0 33 4"><polyline points="0,0 2,3 4,0 6,3 8,0 10,3 12,0 14,3 16,0 18,3 20,0 22,3 24,0 26,3 28,0 30,3 32,0" transform="translate(0.5 0.5)" fill="none" stroke="#ff0000" stroke-width="1"/></svg><svg class="abs" style="left:361px;top:254px" width="25" height="4" viewBox="0 0 25 4"><polyline points="0,0 2,3 4,0 6,3 8,0 10,3 12,0 14,3 16,0 18,3 20,0 22,3 24,0" transform="translate(0.5 0.5)" fill="none" stroke="#ff0000" stroke-width="1"/></svg><svg class="abs" style="left:361px;top:272px" width="25" height="4" viewBox="0 0 25 4"><polyline points="0,0 2,3 4,0 6,3 8,0 10,3 12,0 14,3 16,0 18,3 20,0 22,3 24,0" transform="translate(0.5 0.5)" fill="none" stroke="#ff0000" stroke-width="1"/></svg><svg class="abs" style="left:361px;top:290px" width="25" height="4" viewBox="0 0 25 4"><polyline points="0,0 2,3 4,0 6,3 8,0 10,3 12,0 14,3 16,0 18,3 20,0 22,3 24,0" transform="translate(0.5 0.5)" fill="none" stroke="#ff0000" stroke-width="1"/></svg><svg class="abs" style="left:361px;top:308px" width="33" height="4" viewBox="0 0 33 4"><polyline points="0,0 2,3 4,0 6,3 8,0 10,3 12,0 14,3 16,0 18,3 20,0 22,3 24,0 26,3 28,0 30,3 32,0" transform="translate(0.5 0.5)" fill="none" stroke="#ff0000" stroke-width="1"/></svg><svg class="abs" style="left:361px;top:326px" width="57" height="4" viewBox="0 0 57 4"><polyline points="0,0 2,3 4,0 6,3 8,0 10,3 12,0 14,3 16,0 18,3 20,0 22,3 24,0 26,3 28,0 30,3 32,0 34,3 36,0 38,3 40,0 42,3 44,0 46,3 48,0 50,3 52,0 54,3 56,0" transform="translate(0.5 0.5)" fill="none" stroke="#ff0000" stroke-width="1"/></svg><svg class="abs" style="left:361px;top:344px" width="25" height="4" viewBox="0 0 25 4"><polyline points="0,0 2,3 4,0 6,3 8,0 10,3 12,0 14,3 16,0 18,3 20,0 22,3 24,0" transform="translate(0.5 0.5)" fill="none" stroke="#ff0000" stroke-width="1"/></svg><svg class="abs" style="left:233px;top:452px" width="17" height="4" viewBox="0 0 17 4"><polyline points="0,0 2,3 4,0 6,3 8,0 10,3 12,0 14,3 16,0" transform="translate(0.5 0.5)" fill="none" stroke="#ff0000" stroke-width="1"/></svg><svg class="abs" style="left:313px;top:452px" width="89" height="4" viewBox="0 0 89 4"><polyline points="0,0 2,3 4,0 6,3 8,0 10,3 12,0 14,3 16,0 18,3 20,0 22,3 24,0 26,3 28,0 30,3 32,0 34,3 36,0 38,3 40,0 42,3 44,0 46,3 48,0 50,3 52,0 54,3 56,0 58,3 60,0 62,3 64,0 66,3 68,0 70,3 72,0 74,3 76,0 78,3 80,0 82,3 84,0 86,3 88,0" transform="translate(0.5 0.5)" fill="none" stroke="#ff0000" stroke-width="1"/></svg><svg class="abs" style="left:457px;top:488px" width="25" height="4" viewBox="0 0 25 4"><polyline points="0,0 2,3 4,0 6,3 8,0 10,3 12,0 14,3 16,0 18,3 20,0 22,3 24,0" transform="translate(0.5 0.5)" fill="none" stroke="#ff0000" stroke-width="1"/></svg><svg class="abs" style="left:369px;top:542px" width="33" height="4" viewBox="0 0 33 4"><polyline points="0,0 2,3 4,0 6,3 8,0 10,3 12,0 14,3 16,0 18,3 20,0 22,3 24,0 26,3 28,0 30,3 32,0" transform="translate(0.5 0.5)" fill="none" stroke="#ff0000" stroke-width="1"/></svg><svg class="abs" style="left:337px;top:560px" width="49" height="4" viewBox="0 0 49 4"><polyline points="0,0 2,3 4,0 6,3 8,0 10,3 12,0 14,3 16,0 18,3 20,0 22,3 24,0 26,3 28,0 30,3 32,0 34,3 36,0 38,3 40,0 42,3 44,0 46,3 48,0" transform="translate(0.5 0.5)" fill="none" stroke="#ff0000" stroke-width="1"/></svg>
<div id="vsb" class="abs"></div><div id="hsb" class="abs"></div><svg class="abs" style="left:1585px;top:103px" width="8" height="6" viewBox="0 0 8 6"><path d="M0.8 4.5L4 1.3 7.2 4.5" fill="none" stroke="#505050" stroke-width="1.8"/></svg><svg class="abs" style="left:1585px;top:805px" width="8" height="6" viewBox="0 0 8 6"><path d="M0.8 1.3L4 4.5 7.2 1.3" fill="none" stroke="#505050" stroke-width="1.8"/></svg><div class="abs" style="left:1581px;top:781px;width:15px;height:17px;background:#cdcdcd"></div><svg class="abs" style="left:9px;top:820px" width="6" height="8" viewBox="0 0 6 8"><path d="M4.5 0.8L1.3 4 4.5 7.2" fill="none" stroke="#505050" stroke-width="1.8"/></svg><svg class="abs" style="left:1568px;top:820px" width="6" height="8" viewBox="0 0 6 8"><path d="M1.3 0.8L4.5 4 1.3 7.2" fill="none" stroke="#505050" stroke-width="1.8"/></svg><div class="abs" style="left:21px;top:817px;width:1329px;height:15px;background:#cdcdcd"></div>
<div id="status" class="abs"><div class="ssep" style="left:859px"></div><div class="ssep" style="left:1059px"></div><div class="ssep" style="left:1319px"></div><div class="ssep" style="left:1427px"></div><div class="ssep" style="left:1549px"></div><div class="ssep" style="left:1579px"></div><span style="left:2px">eXtensible Markup Language file</span><span style="left:864px">length : 104892</span><span style="left:955px">lines : 1836</span><span style="left:1064px">Ln : 1823</span><span style="left:1122px">Col : 7</span><span style="left:1167px">Sel : 0 | 0</span><span style="left:1324px">Dos\Windows</span><span style="left:1434px">ANSI as UTF-8</span><span style="left:1554px">INS</span></div>
<div id="task" class="abs"></div><div class="abs" style="left:0;top:860px;width:1600px;height:40px;background:linear-gradient(100deg,#6c879d 0%,#7590a6 30%,#6e899f 55%,#7691a7 80%,#708ba1 100%)"></div><div class="abs" style="left:0;top:860px;width:1600px;height:3px;background:linear-gradient(to bottom,#4a5d6e,#5f778b 60%,rgba(110,137,159,0))"></div><div class="abs" style="left:74px;top:861px;width:53px;height:38px;background:rgba(255,255,255,0.2);border:1px solid rgba(255,255,255,0.4)"></div><div class="abs" style="left:131px;top:861px;width:48px;height:38px;background:rgba(255,255,255,0.2);border:1px solid rgba(255,255,255,0.4)"></div><div class="abs" style="left:530px;top:861px;width:53px;height:38px;background:rgba(255,255,255,0.2);border:1px solid rgba(255,255,255,0.4)"></div><div class="abs" style="left:180px;top:861px;width:4px;height:38px;background:rgba(255,255,255,0.2);border:1px solid rgba(255,255,255,0.4)"></div><svg class="abs" style="left:28px;top:865px" width="30" height="30" viewBox="0 0 30 30"><rect x="0.5" y="0.5" width="29" height="29" rx="6" fill="#8a0808" stroke="#505050"/><rect x="3" y="2" width="24" height="14" rx="5" fill="#c41a1a" opacity="0.8"/><path d="M10 10.5a7 7 0 1 0 10 0" fill="none" stroke="#fff" stroke-width="2.2"/><path d="M15 6v8" stroke="#fff" stroke-width="2.2"/></svg><svg class="abs" style="left:83px;top:866px" width="34" height="30" viewBox="0 0 34 30"><defs><linearGradient id="fo" x1="0" y1="0" x2="0" y2="1"><stop offset="0" stop-color="#fbeaa8"/><stop offset="1" stop-color="#f0d27a"/></linearGradient><linearGradient id="fb" x1="0" y1="0" x2="0" y2="1"><stop offset="0" stop-color="#d8f2ff"/><stop offset="1" stop-color="#6ab8e8"/></linearGradient></defs><path d="M2 3h14l2 2h14v21H2z" fill="#e8c870" stroke="#c9a650" stroke-width="0.8"/><rect x="4" y="2" width="11" height="3" fill="#fff"/><rect x="4" y="2" width="3" height="2" fill="#10b020"/><rect x="12" y="4" width="11" height="3" fill="#fff"/><rect x="12" y="4" width="3" height="2" fill="#d02020"/><rect x="20" y="6" width="10" height="3" fill="#fff"/><rect x="20" y="6" width="3" height="2" fill="#2090f0"/><path d="M2 9h30v17H2z" fill="url(#fo)" stroke="#c9a650" stroke-width="0.8"/><path d="M5 18h22v11h-6v-6H11v6H5z" fill="url(#fb)" stroke="#3a90d0" stroke-width="0.9"/></svg><svg class="abs" style="left:139px;top:863px" width="34" height="33" viewBox="0 0 34 33"><defs><radialGradient id="ie" cx="40%" cy="35%" r="70%"><stop offset="0" stop-color="#a8f0ff"/><stop offset="0.6" stop-color="#40b8f0"/><stop offset="1" stop-color="#1a78d0"/></radialGradient></defs><ellipse cx="17" cy="17" rx="13" ry="12.5" fill="url(#ie)" stroke="#2a70b8" stroke-width="0.8"/><ellipse cx="18" cy="13" rx="6" ry="3.2" fill="#7f9ab3" stroke="#2a70b8" stroke-width="0.8"/><path d="M11 19.5h20v6H18c-2 0-3-1-3-2z" fill="#7f9ab3"/><path d="M11 18.5h20" stroke="#2a70b8" stroke-width="0.8"/><path d="M3 30C-2 26 10 12 20 6c8-5 14-6 12 0" fill="none" stroke="#f4c020" stroke-width="2.6"/></svg><svg class="abs" style="left:199px;top:865px" width="30" height="30" viewBox="0 0 30 30"><rect x="0.5" y="0.5" width="29" height="29" rx="4" fill="#f2e41a" stroke="#2a2a2a"/><path d="M15 5a10 10 0 0 1 9.5 7l2-1-1.5 6-5-3.5 2-1A7 7 0 0 0 15 8z M24 20a10 10 0 0 1-13 4.5l-1 2-3-5.5 6-1-1 2a7 7 0 0 0 9.5-3.5z M6 20a10 10 0 0 1 3-12.5l-1-2 6 .5-2.5 5.5-1-2A7 7 0 0 0 9 19z" fill="#fafa30" stroke="#6a6a00" stroke-width="0.8"/></svg><svg class="abs" style="left:256px;top:864px" width="30" height="30" viewBox="0 0 30 30"><path d="M4 27c3-5 7-10 10-13L11 8l3-6 3 4 1 5 7-7 3 3-9 9 2 9-6 3-2-8-6 8z" fill="#44b02a" stroke="#237a14" stroke-width="0.8"/><path d="M14 14l7-6" stroke="#9ae070" stroke-width="1.2"/></svg><svg class="abs" style="left:313px;top:867px" width="30" height="29" viewBox="0 0 30 29"><rect x="1" y="6" width="6" height="16" fill="#d8d8d8" stroke="#9a9a9a"/><rect x="2" y="8" width="2" height="2" fill="#3a3"/><rect x="6.5" y="1.5" width="22" height="18" rx="1" fill="#ececec" stroke="#a8a8a8"/><rect x="9" y="4" width="17" height="13" fill="#dbeaf6"/><path d="M9 12h3l2-6 2 9 2-5 2 3 5 0" fill="none" stroke="#2a7ad0" stroke-width="1"/><path d="M13 20h9l3 6H10z" fill="#d0d0d0"/><ellipse cx="17.5" cy="26" rx="8" ry="2" fill="#c8c8c8"/></svg><svg class="abs" style="left:369px;top:864px" width="32" height="30" viewBox="0 0 32 30"><circle cx="13" cy="12" r="8.5" fill="none" stroke="#c4d8ee" stroke-width="5" stroke-dasharray="3.3 2"/><circle cx="13" cy="12" r="7" fill="none" stroke="#dde9f6" stroke-width="3"/><circle cx="25" cy="23" r="4.3" fill="none" stroke="#cfe0f2" stroke-width="3.6" stroke-dasharray="2.2 1.4"/><circle cx="25" cy="23" r="3.5" fill="none" stroke="#e4eef8" stroke-width="1.5"/></svg><svg class="abs" style="left:426px;top:864px" width="32" height="31" viewBox="0 0 32 31"><defs><radialGradient id="idm" cx="35%" cy="30%" r="75%"><stop offset="0" stop-color="#9ad0ff"/><stop offset="0.7" stop-color="#2a78d0"/><stop offset="1" stop-color="#1a4a90"/></radialGradient></defs><path d="M14 8A10 9 0 0 0 14 26" fill="none" stroke="#e83a2a" stroke-width="2.2" transform="translate(0 0)"/><path d="M14 9.5A9.5 8.5 0 0 0 13 27" fill="none" stroke="#f6d020" stroke-width="2.2" transform="translate(0.5 1.5)"/><path d="M14 11A9 8 0 0 0 13 28" fill="none" stroke="#40b030" stroke-width="2.2" transform="translate(1 2.5)"/><path d="M14 12A8.5 7.5 0 0 0 14 28" fill="none" stroke="#4a70e0" stroke-width="2" transform="translate(1.5 3)"/><circle cx="20.5" cy="11" r="10" fill="url(#idm)"/><path d="M13 5c3-2 7-2 8 1s-2 5 0 8-3 4-5 2-4-2-4-5 0-4 1-6z" fill="#c8d850" opacity="0.9"/><path d="M13 15l18 8-16 7z" fill="#1aa020" stroke="#0a6a10" stroke-width="0.6"/></svg><svg class="abs" style="left:482px;top:864px" width="34" height="32" viewBox="0 0 34 32"><rect x="1" y="0" width="2" height="32" fill="#f01010"/><rect x="3" y="0" width="2" height="32" fill="#10a030"/><rect x="5" y="0" width="2" height="32" fill="#1030f0"/><circle cx="14" cy="16" r="4.2" fill="#1a1a1a"/><circle cx="13" cy="15" r="1.3" fill="#888"/><path d="M18 6a11 11 0 0 1 0 20" fill="none" stroke="#111" stroke-width="2.2"/><path d="M20 1a16 16 0 0 1 0 30" fill="none" stroke="#111" stroke-width="2.6"/></svg><svg class="abs" style="left:540px;top:863px" width="32" height="32" viewBox="0 0 32 32"><circle cx="16" cy="16" r="16" fill="#6cb43c"/><path d="M5 10l6-2 5 13c1 2 4 2 5-1l3-10 5-1-3 12c-2 5-7 7-11 5l1 7-6 1z" fill="#fff"/></svg><svg class="abs" style="left:597px;top:868px" width="33" height="26" viewBox="0 0 33 26"><path d="M1 1h25l6 6H7z" fill="#7a3a2a"/><path d="M1 1l6 6v18l-6-6z" fill="#e8e8f0" stroke="#444" stroke-width="0.6"/><rect x="7" y="7" width="25" height="6" fill="#b02a9a" stroke="#3a1a30" stroke-width="0.6"/><rect x="7" y="13" width="25" height="6" fill="#1a3ae0" stroke="#1a1a40" stroke-width="0.6"/><rect x="7" y="19" width="25" height="6" fill="#18a028" stroke="#1a401a" stroke-width="0.6"/><path d="M17 1l4 6v18h-3V8z" fill="#c88a30"/><rect x="17" y="11" width="4" height="5" fill="#eee" stroke="#333" stroke-width="0.7"/></svg><svg class="abs" style="left:654px;top:865px" width="31" height="31" viewBox="0 0 31 31"><rect x="1" y="1" width="29" height="29" rx="7" fill="#1a6ab8" stroke="#2a2a2a" stroke-width="2"/><rect x="5" y="4" width="21" height="12" rx="4" fill="#3a9ae0" opacity="0.6"/><path d="M7 6h11l2 2v15H7z" fill="none" stroke="#fff" stroke-width="1.5"/><path d="M10 10h7M10 13h6M10 16h4M10 19h4" stroke="#fff" stroke-width="1.2"/><circle cx="20.5" cy="20" r="4" fill="none" stroke="#fff" stroke-width="3.2" stroke-dasharray="2 1.1"/><circle cx="20.5" cy="20" r="1.5" fill="#1a6ab8"/></svg><svg class="abs" style="left:711px;top:865px" width="30" height="30" viewBox="0 0 30 30"><path d="M11 1h12l5 3-3 22-15-2z" fill="#f4f4f4" stroke="#9aa"/><path d="M28 4l0 22-3 0z" fill="#b89a50"/><path d="M11 2h12l-6 22H1z" fill="#5ab4cc"/><path d="M12 3h10l-2 8H9z" fill="#a8dcea" opacity="0.7"/><path d="M12 1h12" stroke="#666" stroke-width="1.2" stroke-dasharray="1 1"/></svg><svg class="abs" style="left:768px;top:864px" width="31" height="31" viewBox="0 0 31 31"><defs><radialGradient id="ws" cx="35%" cy="30%" r="75%"><stop offset="0" stop-color="#6ab0ff"/><stop offset="1" stop-color="#1a4ac8"/></radialGradient></defs><path d="M1 30C3 14 12 4 30 1 24 10 22 20 30 30z" fill="url(#ws)"/><path d="M2 28c5-3 14-3 27-1" fill="none" stroke="#b8dcff" stroke-width="1.6"/></svg><svg class="abs" style="left:824px;top:871px" width="32" height="18" viewBox="0 0 32 18"><path d="M1 2c9-2 22-1 30 1l-3 12c-8 2-17 2-25 0z" fill="#2a3854" stroke="#6a7890" stroke-width="0.6"/><text x="4" y="10" font-family="Liberation Sans" font-size="8.5" letter-spacing="-0.3" fill="#8ae040">xbmc</text><path d="M5 13h21" stroke="#c86a2a" stroke-width="0.8"/></svg><svg class="abs" style="left:882px;top:864px" width="32" height="32" viewBox="0 0 32 32"><defs><linearGradient id="yo" x1="0" y1="0" x2="0" y2="1"><stop offset="0" stop-color="#fde21a"/><stop offset="1" stop-color="#f6a020"/></linearGradient></defs><rect x="0" y="0" width="32" height="32" rx="1" fill="url(#yo)"/><circle cx="16" cy="16" r="11" fill="none" stroke="#111" stroke-width="4.2"/></svg><svg class="abs" style="left:939px;top:864px" width="32" height="32" viewBox="0 0 32 32"><circle cx="16" cy="16" r="15.5" fill="#d8d8d8"/><circle cx="16" cy="16" r="14" fill="#76b646"/><path d="M8 7h5v20H8zM15 12h7a5 5 0 0 1 0 10h-2v5h-5z" fill="#fff"/><path d="M5 27L27 5" stroke="#c8c8c8" stroke-width="5"/></svg><svg class="abs" style="left:996px;top:867px" width="29" height="25" viewBox="0 0 29 25"><rect x="0.5" y="0.5" width="28" height="24" fill="#000" stroke="#999"/><rect x="0.5" y="0.5" width="28" height="2.5" fill="#e0e0e0"/><text x="3" y="12" font-family="Liberation Mono" font-size="8" fill="#fff">C:\_</text></svg><svg class="abs" style="left:1053px;top:864px" width="28" height="31" viewBox="0 0 28 31"><path d="M11 1h6l8 24H3z" fill="#f27a0a"/><path d="M8.5 8h11l2 7H6.5z" fill="#e4e4e4"/><path d="M5.5 18h17l1.5 5H4z" fill="#e4e4e4"/><rect x="1" y="25" width="26" height="5" rx="1.5" fill="#f28a10"/></svg><svg class="abs" style="left:1107px;top:863px" width="33" height="33" viewBox="0 0 33 33"><path d="M3 33V10l2-6 4 4 2-5 4 6 4 3 9 6 4 4-3 3-9-2-5 3-3 7z" fill="#f06010" stroke="#111" stroke-width="1"/><circle cx="15" cy="11" r="2.3" fill="#fff" stroke="#111" stroke-width="0.8"/><circle cx="19" cy="12" r="2" fill="#fff" stroke="#111" stroke-width="0.8"/><circle cx="31" cy="19" r="1.8" fill="#111"/><path d="M10 18c3 3 9 4 14 4" stroke="#111" fill="none" stroke-width="1"/></svg><svg class="abs" style="left:1163px;top:864px" width="33" height="32" viewBox="0 0 33 32"><defs><radialGradient id="it" cx="35%" cy="30%" r="75%"><stop offset="0" stop-color="#5ac8ff"/><stop offset="1" stop-color="#0a4aa8"/></radialGradient></defs><circle cx="16.5" cy="16" r="15.5" fill="#eef2f6"/><circle cx="16.5" cy="16" r="13.5" fill="url(#it)"/><path d="M13 9l9-2.5v12" stroke="#e8eef4" stroke-width="2.2" fill="none"/><path d="M13 9v12" stroke="#e8eef4" stroke-width="2.2"/><ellipse cx="10.5" cy="21" rx="3" ry="2.4" fill="#e8eef4"/><ellipse cx="19.5" cy="19" rx="3" ry="2.4" fill="#e8eef4"/></svg><svg class="abs" style="left:1220px;top:864px" width="31" height="30" viewBox="0 0 31 30"><g transform="rotate(-8 15 15)" opacity="0.85"><path d="M4 6l10-2v10H4z" fill="#e84a20"/><path d="M15 4l12-2v12H15z" fill="#4aa83a"/><path d="M4 15h10v10L4 24z" fill="#2a80d8"/><path d="M15 15h12v12l-12-2z" fill="#f0a018"/></g><path d="M15 4a11 11 0 0 1 10.5 7.5l2.2-1-1.7 6.5-5.5-3.8 2.2-1A7.5 7.5 0 0 0 15 7.5z M25 20.5a11 11 0 0 1-14 5l-1 2.2-3.4-6 6.6-1.1-1 2.2a7.5 7.5 0 0 0 10.3-3.8z M5 21a11 11 0 0 1 3.2-14l-1.1-2.1 6.6.5-2.7 6-1.1-2.2A7.5 7.5 0 0 0 8.6 20z" fill="#f6f020" stroke="#8a7a00" stroke-width="0.7"/></svg><svg class="abs" style="left:1276px;top:864px" width="32" height="31" viewBox="0 0 32 31"><path d="M10 1h5l6 19H4z" fill="#5a8cb4"/><path d="M8 8h9l2 6H6z" fill="#f0f0f0"/><path d="M1 23l11-5 11 5-11 7z" fill="#4a78a0"/><circle cx="22" cy="20" r="8" fill="#a4b8cc" stroke="#d08ae0" stroke-width="1.3"/><path d="M20 16l6 4-6 4z" fill="#3ab4f0"/></svg><div class="abs" style="left:1321px;top:861px;width:52px;height:38px;background:rgba(255,255,255,0.32);border:1px solid rgba(255,255,255,0.8)"></div><svg class="abs" style="left:1331px;top:863px" width="32" height="34" viewBox="0 0 32 34"><defs><linearGradient id="np" x1="0" y1="0" x2="0" y2="1"><stop offset="0" stop-color="#f0fa60"/><stop offset="0.5" stop-color="#78c838"/><stop offset="1" stop-color="#0a8010"/></linearGradient></defs><path d="M1.5 1.5h17l5 5v25h-22z" fill="#fff" stroke="#777"/><path d="M3 4h15" stroke="#888" stroke-dasharray="1 1"/><path d="M3 7h19M3 9h19M3 11h19M3 13h19" stroke="#dde6ee" stroke-width="0.8"/><rect x="2.5" y="13" width="20" height="17.5" fill="url(#np)"/><path d="M7 23V12.5a1.8 1.8 0 0 1 3.6 0V23" fill="#ddd" stroke="#111" stroke-width="1.4"/><path d="M11.5 18.5h3.5M13.25 16.75v3.5M16 18.5h3.5M17.75 16.75v3.5" stroke="#111" stroke-width="1.2"/><path d="M18.5 26l10-21" stroke="#f2a818" stroke-width="3.2"/><path d="M17.6 28l.4-3 2 1z" fill="#333"/><path d="M28 5l1.5-3.5 2 2z" fill="#c82020"/></svg><svg class="abs" style="left:1383px;top:876px" width="9" height="6" viewBox="0 0 9 6"><path d="M0 5.5L4.5 0.5 9 5.5z" fill="#fff"/></svg><svg class="abs" style="left:1404px;top:872px" width="17" height="17" viewBox="0 0 17 17"><defs><linearGradient id="cl" x1="0" y1="0" x2="0" y2="1"><stop offset="0" stop-color="#4a5c90"/><stop offset="1" stop-color="#1a2850"/></linearGradient></defs><rect x="0" y="0" width="17" height="17" rx="2.5" fill="url(#cl)"/><path d="M2.5 12a2.5 2.5 0 0 1 2-3.2 3.5 3.5 0 0 1 6.5-1.5 2.8 2.8 0 0 1 3.5 4.7z" fill="#e6ecf6"/></svg><svg class="abs" style="left:1434px;top:872px" width="17" height="17" viewBox="0 0 17 17"><path d="M1 4.5h5v4.5H1zM2.2 1v3.5M4.8 1v3.5M3.5 9v8" stroke="#fff" stroke-width="1.4" fill="none"/><rect x="8.7" y="2.7" width="6.6" height="13.6" rx="1" fill="none" stroke="#fff" stroke-width="1.4"/><rect x="10" y="0.5" width="4" height="2.2" fill="#fff"/></svg><svg class="abs" style="left:1457px;top:874px" width="16" height="13" viewBox="0 0 16 13"><path d="M1 10h2v2H1zM5 8h2v4H5zM9 5h2v7H9zM13 2h2v10h-2z" fill="#fff"/><path d="M0 12.5h16" stroke="#fff" stroke-width="1"/></svg><svg class="abs" style="left:1482px;top:872px" width="17" height="17" viewBox="0 0 17 17"><path d="M1 5h3l4-4v14l-4-4H1z" fill="#fff"/><circle cx="11.5" cy="11.5" r="4" fill="#fff" stroke="#e02020" stroke-width="2"/><path d="M9 9l5 5" stroke="#e02020" stroke-width="2"/></svg><div class="abs" style="left:1500px;top:865px;width:90px;text-align:center;font-size:12px;line-height:16px;color:#fff">11:24<br>01/09/2013</div>
<div class="abs" style="left:1119px;top:807px;width:308px;height:54px;border:1px solid rgba(110,110,110,0.55);border-radius:6px;background:rgba(255,255,255,0.12);box-shadow:2px 2px 2px rgba(0,0,0,0.28)"></div><svg class="abs" style="left:1394px;top:860px" width="22" height="20" viewBox="0 0 22 20"><path d="M0 0h18v20z" fill="rgba(220,230,240,0.35)"/><path d="M0 0l18 20V0" fill="none" stroke="rgba(80,80,80,0.4)"/></svg><svg class="abs" style="left:1131px;top:819px" width="16" height="16" viewBox="0 0 16 16"><circle cx="8" cy="8" r="7.5" fill="#b8cce0"/><path d="M8 6.5v6" stroke="#fff" stroke-width="2"/><circle cx="8" cy="4" r="1.1" fill="#fff"/></svg><span class="abs" style="left:1152px;top:817px;font-size:15px;letter-spacing:0.28px;color:#a8bcd4;white-space:nowrap;line-height:20px">Get unlimited storage and speed.</span><span class="abs" style="left:1153px;top:837px;font-size:12px;color:rgba(150,150,150,0.45);white-space:nowrap;line-height:16px">Upgrade OpenDrive to unlimited plan</span><svg class="abs" style="left:1382px;top:817px" width="14" height="14" viewBox="0 0 14 14"><path d="M2 12.5l6-6" stroke="#d6d6d6" stroke-width="3" stroke-linecap="round"/><path d="M6.5 5.5a4 4 0 0 1 5-4.5l-2.2 2.2.8 2 2 .8 2.2-2.2a4 4 0 0 1-4.5 5z" fill="#d6d6d6"/></svg><svg class="abs" style="left:1403px;top:818px" width="11" height="11" viewBox="0 0 11 11"><path d="M1 1l9 9M10 1l-9 9" stroke="#d8d8d8" stroke-width="1.5"/></svg></body></html>
